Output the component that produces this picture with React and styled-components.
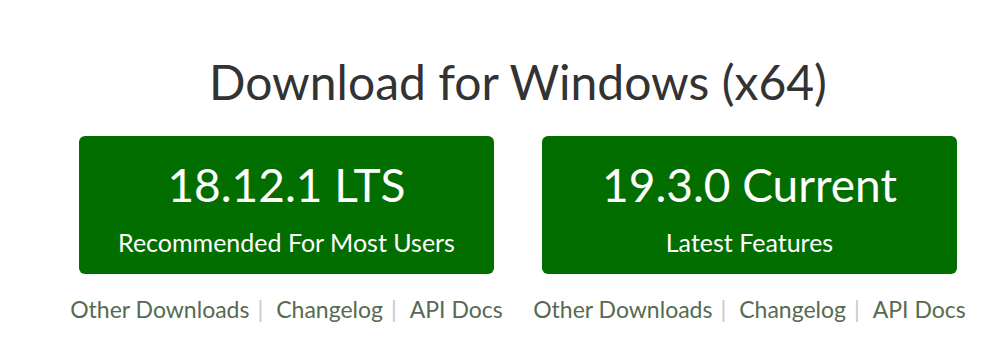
import React from "react";
import styled, { createGlobalStyle } from "styled-components";

const Global = createGlobalStyle`
  html, body { margin: 0; padding: 0; background: #fff; }
  body { font-family: Lato, "Open Sans", sans-serif; }
`;

const Page = styled.section`
  width: 1005px;
  height: 361px;
  box-sizing: border-box;
  padding: 52px 0 0 31px;
  display: flex;
  flex-direction: column;
  align-items: center;
  overflow: hidden;
`;

const Title = styled.h2`
  margin: 0;
  font-family: Lato, sans-serif;
  font-weight: 400;
  font-size: 48px;
  line-height: 60px;
  color: #333;
`;

const Row = styled.div`
  display: flex;
  gap: 48px;
  margin-top: 24px;
`;

const Column = styled.div`
  width: 415px;
  display: flex;
  flex-direction: column;
  align-items: center;
`;

const DownloadButton = styled.a`
  width: 100%;
  height: 138px;
  box-sizing: border-box;
  background: #026e00;
  border-radius: 6px;
  color: #fff;
  text-decoration: none;
  display: flex;
  flex-direction: column;
  align-items: center;
  padding-top: 22px;
`;

const Version = styled.span`
  font-size: 46px;
  line-height: 54px;
`;

const Sub = styled.span`
  font-size: 25px;
  line-height: 30px;
  margin-top: 15px;
`;

const Links = styled.div`
  display: flex;
  align-items: center;
  flex-shrink: 0;
  white-space: nowrap;
  margin-top: 20px;
  font-size: 23px;
  line-height: 30px;
`;

const Link = styled.a`
  color: #566b50;
  text-decoration: none;
`;

const Sep = styled.span`
  color: #c8c8c8;
  margin: 0 13px 0 8px;
`;

const builds = [
  { version: "18.12.1 LTS", sub: "Recommended For Most Users" },
  { version: "19.3.0 Current", sub: "Latest Features" },
];

export default function App() {
  return (
    <>
      <Global />
      <Page>
        <Title>Download for Windows (x64)</Title>
        <Row>
          {builds.map((b) => (
            <Column key={b.version}>
              <DownloadButton href="#">
                <Version>{b.version}</Version>
                <Sub>{b.sub}</Sub>
              </DownloadButton>
              <Links>
                <Link href="#">Other Downloads</Link>
                <Sep>|</Sep>
                <Link href="#">Changelog</Link>
                <Sep>|</Sep>
                <Link href="#">API Docs</Link>
              </Links>
            </Column>
          ))}
        </Row>
      </Page>
    </>
  );
}
